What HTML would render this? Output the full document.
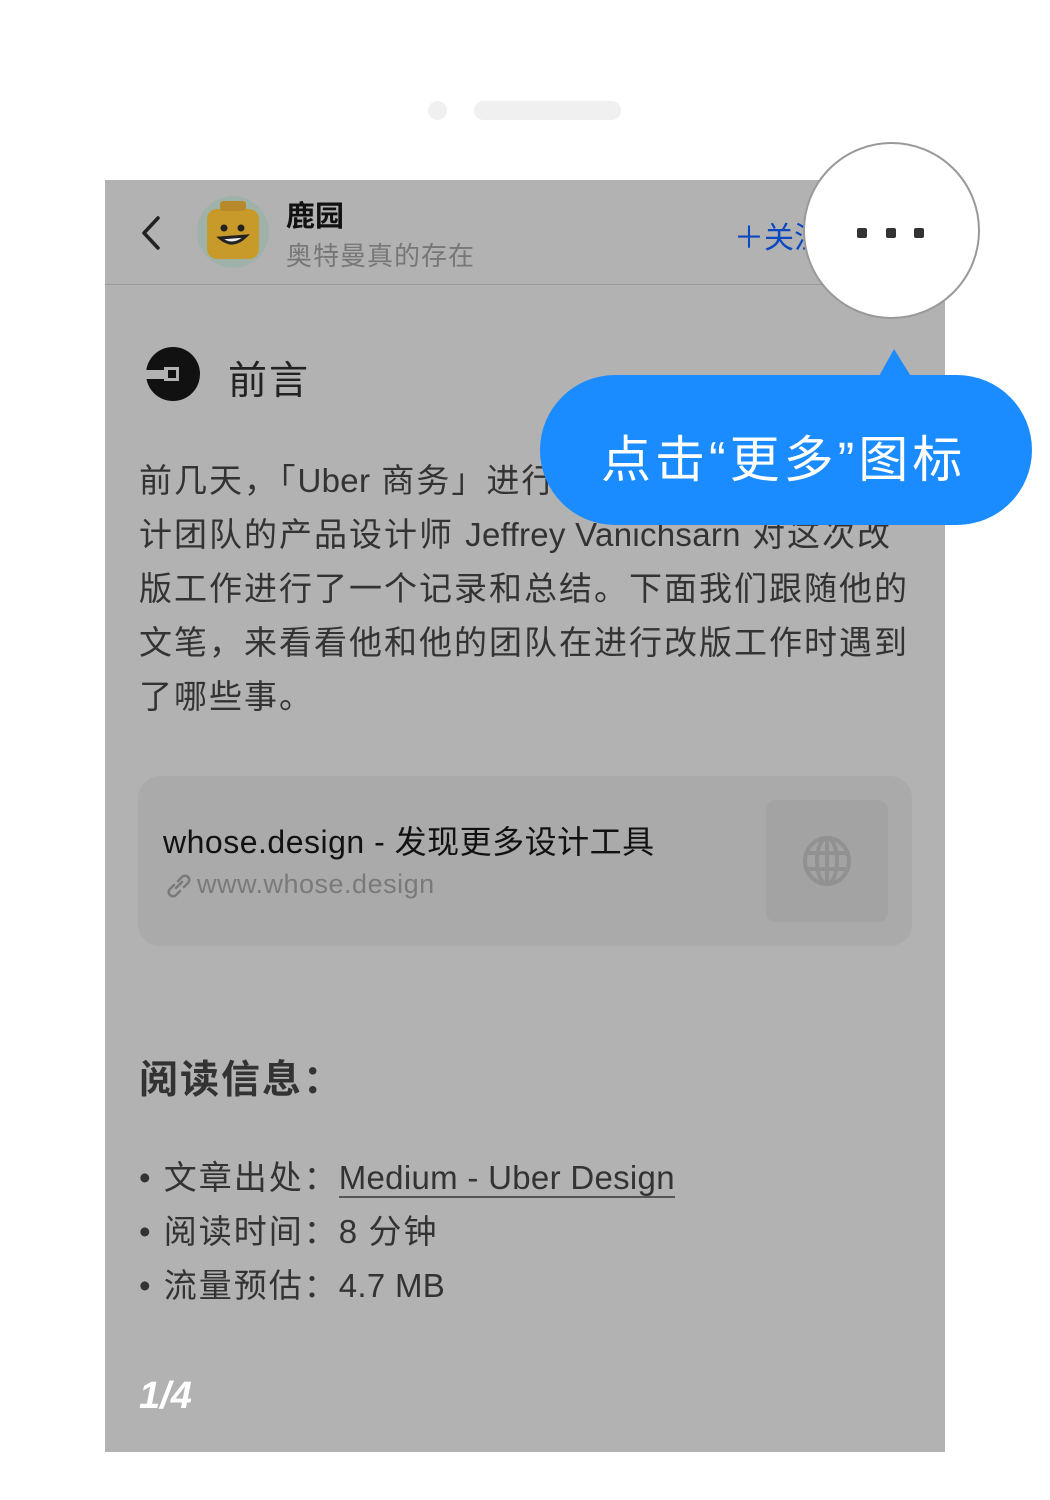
<!DOCTYPE html>
<html><head><meta charset="utf-8"><style>
*{margin:0;padding:0;box-sizing:border-box}
body{width:1050px;height:1500px;background:#fff;position:relative;overflow:hidden;font-family:"Liberation Sans","Noto Sans CJK SC",sans-serif;}
.abs{position:absolute;white-space:nowrap}
.panel{position:absolute;left:105px;top:180px;width:840px;height:1272px;background:#b2b2b2}
.p{font-size:33px;color:#333;line-height:54px;letter-spacing:2px}
.l{letter-spacing:0.3px}
</style></head><body>
<div class="abs" style="left:428px;top:101px;width:19px;height:19px;border-radius:50%;background:#f0f0f0"></div>
<div class="abs" style="left:474px;top:101px;width:147px;height:19px;border-radius:10px;background:#f0f0f0"></div>
<div class="panel"></div>
<!-- header -->
<svg class="abs" style="left:136px;top:214px" width="28" height="40"><path d="M22 4 L8 19 L22 34" stroke="#222" stroke-width="3.5" fill="none" stroke-linecap="round" stroke-linejoin="round"/></svg>
<svg class="abs" style="left:196px;top:195px" width="74" height="74"><circle cx="37" cy="37" r="36" fill="#9fb2aa"/><rect x="11" y="14" width="52" height="50" rx="10" fill="#c89a2a"/><rect x="24" y="6" width="26" height="10" rx="3" fill="#b8892a"/><circle cx="28" cy="33" r="3.5" fill="#222"/><circle cx="45" cy="33" r="3.5" fill="#222"/><path d="M24 43 Q37 54 50 41 Z" stroke="#222" stroke-width="3" fill="#eee"/></svg>
<div class="abs" style="left:286px;top:193px;font-size:29px;font-weight:bold;color:#111">鹿园</div>
<div class="abs" style="left:286px;top:236px;font-size:26px;color:#777;letter-spacing:1px">奥特曼真的存在</div>
<div class="abs" style="left:734px;top:213px;font-size:30px;color:#0a49c0">＋关注</div>
<div class="abs" style="left:105px;top:284px;width:840px;height:1px;background:#999"></div>
<!-- 前言 -->
<svg class="abs" style="left:146px;top:347px" width="54" height="54"><circle cx="27" cy="27" r="27" fill="#111"/><rect x="0" y="23" width="26" height="9" fill="#b2b2b2"/><rect x="18" y="20" width="15" height="14" fill="#b2b2b2"/><rect x="22" y="23" width="8" height="8" fill="#111"/></svg>
<div class="abs" style="left:228px;top:350px;font-size:39px;color:#222;letter-spacing:2px">前言</div>
<div class="abs p" style="left:139px;top:454px">前几天，「<span class="l">Uber</span> 商务」进行了改版，<span class="l">Uber</span> 设<br>计团队的产品设计师 <span class="l">Jeffrey Vanichsarn</span> 对这次改<br>版工作进行了一个记录和总结。下面我们跟随他的<br>文笔，来看看他和他的团队在进行改版工作时遇到<br>了哪些事。</div>
<!-- link card -->
<div class="abs" style="left:138px;top:776px;width:774px;height:170px;border-radius:22px;background:#aaa"></div>
<div class="abs" style="left:163px;top:817px;font-size:32px;color:#111;letter-spacing:0.5px">whose.design - 发现更多设计工具</div>
<svg class="abs" style="left:164px;top:871px" width="30" height="30"><path d="M12 17 L18 11 M10 14 L6 18 a4 4 0 0 0 6 6 L16 20 M20 16 L24 12 a4 4 0 0 0 -6 -6 L14 10" stroke="#7a7a7a" stroke-width="2.5" fill="none" stroke-linecap="round"/></svg>
<div class="abs" style="left:197px;top:869px;font-size:27px;color:#7a7a7a;letter-spacing:0.5px">www.whose.design</div>
<div class="abs" style="left:766px;top:800px;width:122px;height:122px;border-radius:10px;background:#a3a3a3"></div>
<svg class="abs" style="left:802px;top:836px" width="50" height="50"><g stroke="#919191" stroke-width="4" fill="none"><ellipse cx="25" cy="25" rx="22" ry="23"/><ellipse cx="25" cy="25" rx="10" ry="23"/><line x1="3" y1="17" x2="47" y2="17"/><line x1="3" y1="33" x2="47" y2="33"/><line x1="25" y1="2" x2="25" y2="48"/></g></svg>
<!-- reading info -->
<div class="abs" style="left:139px;top:1049px;font-size:39px;font-weight:bold;color:#333;letter-spacing:2px">阅读信息：</div>
<div class="abs p" style="left:139px;top:1151px">• 文章出处：<span class="l" style="border-bottom:2px solid #555">Medium - Uber Design</span><br>• 阅读时间：<span class="l">8</span> 分钟<br>• 流量预估：<span class="l">4.7 MB</span></div>
<div class="abs" style="left:139px;top:1375px;font-size:38px;font-weight:bold;font-style:italic;color:#fff">1/4</div>
<!-- magnifier circle -->
<div class="abs" style="left:803px;top:142px;width:177px;height:177px;border-radius:50%;background:#fff;border:2px solid #999"></div>
<div class="abs" style="left:857px;top:228px;width:10px;height:10px;border-radius:2px;background:#333"></div>
<div class="abs" style="left:886px;top:228px;width:10px;height:10px;border-radius:2px;background:#333"></div>
<div class="abs" style="left:914px;top:228px;width:10px;height:10px;border-radius:2px;background:#333"></div>
<!-- bubble -->
<svg class="abs" style="left:876px;top:346px" width="40" height="32"><path d="M2 32 L18 3 L36 32 Z" fill="#1a8cff"/></svg>
<div class="abs" style="left:540px;top:375px;width:492px;height:150px;border-radius:75px;background:#1a8cff"></div>
<div class="abs" style="left:601px;top:420px;font-size:50px;color:#fff;letter-spacing:4px">点击“更多”图标</div>
</body></html>
